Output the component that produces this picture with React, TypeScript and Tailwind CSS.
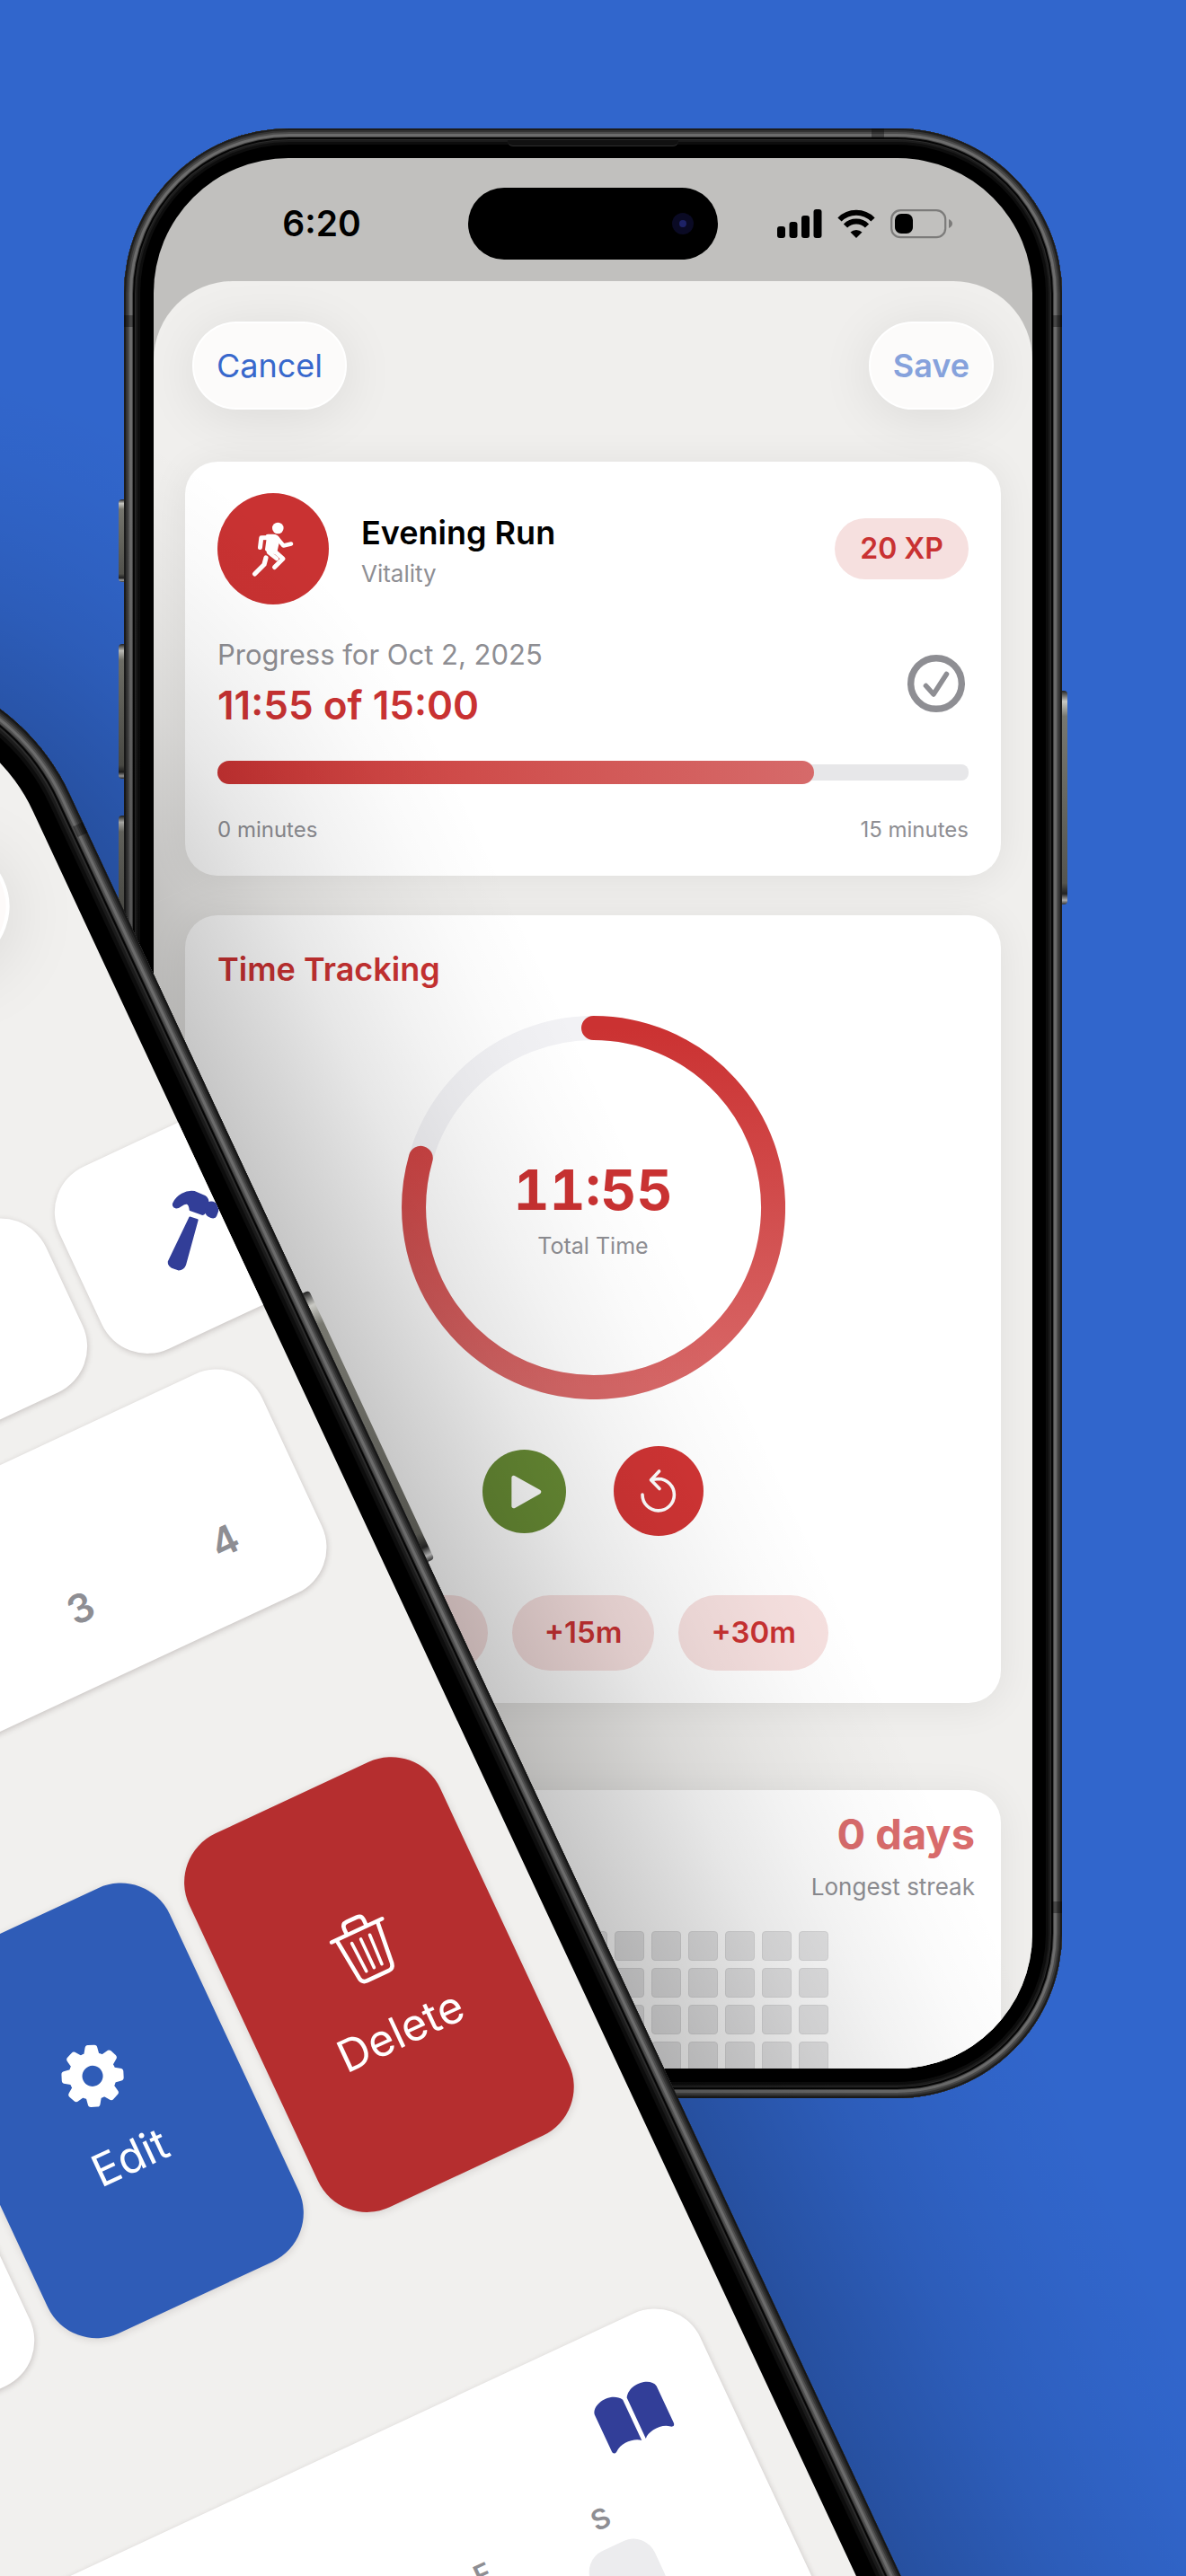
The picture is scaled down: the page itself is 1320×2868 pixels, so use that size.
import type { ReactNode } from "react";

const steps = ["+5m", "+15m", "+30m"];
const heat = Array.from({ length: 52 }, (_, i) => i);

const card = "rounded-[36px] bg-white shadow-[0_4px_44px_rgba(0,0,0,0.07)]";
const tile = "bg-white shadow-[0_2px_6px_rgba(60,40,40,0.22)]";
const sideButton =
  "absolute bg-[linear-gradient(to_bottom,#222_0%,#c9c9c4_5%,#77776f_12%,#55554f_90%,#222_95%,#aaa_98%,#333_100%)]";

function SignalIcon() {
  return (
    <svg width="50" height="32" viewBox="0 0 50 32" aria-hidden="true">
      <rect x="0" y="19" width="9" height="13" rx="3" />
      <rect x="13.5" y="14" width="9" height="18" rx="3" />
      <rect x="27" y="7" width="9" height="25" rx="3" />
      <rect x="40.5" y="0" width="9" height="32" rx="3" />
    </svg>
  );
}

function WifiIcon() {
  return (
    <svg width="42" height="32" viewBox="0 0 42 32" aria-hidden="true">
      <g fill="none" stroke="#000" strokeWidth="6">
        <path d="M2.500 11.500A26 26 0 0 1 39.500 11.500" />
        <path d="M9 18.500A17 17 0 0 1 33 18.500" />
      </g>
      <path d="M21 32L14.500 25.500A9.500 9.500 0 0 1 27.500 25.500Z" />
    </svg>
  );
}

function BatteryIcon() {
  return (
    <svg width="70" height="34" viewBox="0 0 70 34" aria-hidden="true">
      <rect x="1.2" y="2.2" width="60" height="30" rx="10" fill="none" stroke="#7c7b7a" strokeWidth="2.2" />
      <rect x="5" y="6" width="20" height="22" rx="7" />
      <path d="M65 12Q69 14 69 17T65 22Z" fill="#7c7b7a" />
    </svg>
  );
}

function RunnerIcon() {
  return (
    <svg viewBox="0 0 124 124" className="size-full" fill="none" stroke="#fff" strokeLinecap="round" strokeLinejoin="round" aria-hidden="true">
      <circle cx="67.3" cy="39" r="6.3" fill="#fff" stroke="none" />
      <path d="M47.500 60.500L48.800 49.800L60 49.500" strokeWidth="5" />
      <path d="M56 48H62Q66 48 68 52L73.500 58.500L82 56.500" strokeWidth="4.6" />
      <path d="M58 49L65 51L66 56L64 65L73 73L63.500 82.500" strokeWidth="5" />
      <path d="M56 48L66 49L67 55L64 67L57 66L54 63Z" fill="#fff" strokeWidth="2" />
      <path d="M57 66L66 73" strokeWidth="4.5" />
      <path d="M54 72L52 79.500L41.500 90" strokeWidth="5.2" />
    </svg>
  );
}

function HammerIcon() {
  return (
    <svg width="100" height="100" viewBox="0 0 100 100" fill="#323e98" stroke="#323e98" strokeWidth="2" strokeLinejoin="round" aria-hidden="true">
      <path d="M35 23C32 21 33 18 35 17C41 12 53 10 61 16L69 25C71 28 70 32 69 34C71 33 74 34 76 37C79 40 78 42 75 46L71 50C69 52 66 50 64 47C62 44 63 41 64 39C62 42 60 43 58 42L48 32C49 29 50 26 48 24C44 21 39 25 35 23Z" />
      <path d="M44 39.500L50.500 45.500L17 85Q13 89 8 86.500L2.500 81Q0 77 2 74Z" />
    </svg>
  );
}

function BookIcon() {
  const page =
    "M11 28C13 16 38 12 46.500 26V76C41 70 24 68 16 75.500C13 77.500 11 76 11 73Z";
  return (
    <svg width="100" height="100" viewBox="0 0 100 100" fill="#323e98" aria-hidden="true">
      <path d={page} />
      <path d={page} transform="translate(98 0) scale(-1 1)" />
    </svg>
  );
}

function TrashIcon() {
  return (
    <svg width="100" height="100" viewBox="0 0 100 100" fill="none" stroke="#fff" strokeWidth="4.6" strokeLinecap="round" strokeLinejoin="round" aria-hidden="true">
      <path d="M22 27.500H84" />
      <path d="M41 27V20Q41 14 47 14H59Q65 14 65 20V27" />
      <path d="M28 28L33 77Q34 83 40 83H66Q72 83 73 77L78 28" />
      <path d="M42 38L43.500 73M53 38V73M64 38L62.500 73" strokeWidth="3.6" />
    </svg>
  );
}

function GearIcon() {
  return (
    <svg width="100" height="100" viewBox="-50 -50 100 100" fill="#fff" aria-hidden="true">
      <circle r="19" fill="none" stroke="#fff" strokeWidth="15" />
      {[22, 67, 112, 157, 202, 247, 292, 337].map((a) => (
        <path
          key={a}
          transform={`rotate(${a})`}
          d="M-9 -22L-7 -31Q-6.500 -34.500 -3.500 -34.500H3.500Q6.500 -34.500 7 -31L9 -22Z"
        />
      ))}
    </svg>
  );
}

function Antennas() {
  return (
    <>
      <span className="absolute left-0 top-[9.5%] h-[13px] w-3 bg-black/35" />
      <span className="absolute right-0 top-[9.5%] h-[13px] w-3 bg-black/35" />
      <span className="absolute right-0 top-[90%] h-[13px] w-3 bg-black/35" />
      <span className="absolute right-[19%] top-0 h-3 w-[14px] bg-black/35" />
    </>
  );
}

function BackPhone({ children }: { children: ReactNode }) {
  return (
    <div className="relative rounded-[184px] bg-black p-[33px] shadow-[inset_0_0_0_2px_#1c1c1c,inset_0_0_0_4px_#333,inset_0_0_0_6px_#4b4b4b,inset_0_0_0_9px_#6c6c6c,inset_0_0_0_10px_#444,inset_0_0_0_12px_#050505,inset_0_0_0_13px_#2b2b2b,inset_0_0_0_15px_#1b1b1b,inset_0_0_0_18px_#0d0d0d]">
      <span className={`${sideButton} right-full top-[413px] h-[92px] w-[6px] rounded-l-sm`} />
      <span className={`${sideButton} right-full top-[574px] h-[150px] w-[6px] rounded-l-sm`} />
      <span className={`${sideButton} right-full top-[765px] h-[150px] w-[6px] rounded-l-sm`} />
      <span className={`${sideButton} left-full top-[626px] h-[238px] w-[6px] rounded-r-sm`} />
      <Antennas />
      <span className="absolute left-1/2 top-[13px] h-[7px] w-[190px] -translate-x-1/2 rounded-b-md border-b border-[#2e2e2e] bg-[#111]" />
      <div className="relative flex aspect-[978/2127] w-full flex-col overflow-hidden rounded-[150px] bg-[#c1c0be]">
        {children}
      </div>
    </div>
  );
}

/* Soft shadow cast by the tilted phone: a strip beside its long edge and a rounded corner piece. */
function CastShadow() {
  return (
    <>
      <div className="absolute bottom-0 left-full top-[400px] w-[400px] bg-[linear-gradient(to_right,rgba(0,0,0,0.22)_0px,rgba(0,0,0,0.155)_80px,rgba(0,0,0,0.095)_160px,rgba(0,0,0,0.05)_240px,rgba(0,0,0,0.018)_320px,rgba(0,0,0,0)_400px)]" />
      <div className="absolute -right-[400px] -top-[400px] size-[800px] bg-[radial-gradient(circle_at_bottom_left,rgba(0,0,0,0.22)_400px,rgba(0,0,0,0.155)_480px,rgba(0,0,0,0.095)_560px,rgba(0,0,0,0.05)_640px,rgba(0,0,0,0.018)_720px,rgba(0,0,0,0)_800px)]" />
    </>
  );
}

function FrontPhone({ children }: { children: ReactNode }) {
  return (
    <div className="absolute right-full top-[658px] mr-7 w-[108%] origin-top-right -rotate-25">
      <CastShadow />
      <span className={`${sideButton} left-full top-[863px] h-[330px] w-2 rounded-r`} />
      <div className="relative rounded-[250px] bg-black p-[45px] shadow-[inset_0_0_0_2px_#161616,inset_0_0_0_4px_#262626,inset_0_0_0_6px_#383838,inset_0_0_0_8px_#505050,inset_0_0_0_11px_#6c6c6c,inset_0_0_0_13px_#505050,inset_0_0_0_14px_#333,inset_0_0_0_16px_#050505,inset_0_0_0_18px_#2b2b2b,inset_0_0_0_21px_#1b1b1b,inset_0_0_0_25px_#0d0d0d]">
        <Antennas />
        <div className="flex aspect-[978/2127] w-full flex-col overflow-hidden rounded-[205px] bg-[#f1f0ee] px-[45px] pt-[190px]">
          {children}
        </div>
      </div>
    </div>
  );
}

function ProgressCard() {
  return (
    <section className={`${card} flex flex-col px-9 py-[35px]`}>
      <div className="flex items-center">
        <div className="size-[124px] rounded-full bg-[#c93232]">
          <RunnerIcon />
        </div>
        <div className="ml-9 flex-1 pt-1">
          <h1 className="text-[36px] font-semibold leading-11 text-black">Evening Run</h1>
          <p className="mt-2 text-[26px] leading-8 text-[#8e8e93]">Vitality</p>
        </div>
        <span className="rounded-full bg-[#f6e0df] px-7 py-3 text-[32px] font-semibold leading-11 text-[#c93232]">
          20 XP
        </span>
      </div>
      <div className="mt-9 flex items-center justify-between">
        <div>
          <p className="text-[31px] leading-10 text-[#8e8e93]">Progress for Oct 2, 2025</p>
          <p className="mt-2 text-[44px] font-semibold leading-14 text-[#c93232]">11:55 of 15:00</p>
        </div>
        <button type="button" aria-label="Mark complete" className="mr-1">
          <svg width="64" height="64" viewBox="0 0 64 64" fill="none" stroke="#8e8e93" strokeLinecap="round" strokeLinejoin="round" aria-hidden="true">
            <circle cx="32" cy="32" r="28.3" strokeWidth="7.4" />
            <path d="M20.500 34.500L29 44L43.500 21.500" strokeWidth="5.6" />
          </svg>
        </button>
      </div>
      <div
        role="progressbar"
        aria-label="Progress"
        aria-valuenow={715}
        aria-valuemin={0}
        aria-valuemax={900}
        className="relative mt-[34px] flex h-[26px] items-center"
      >
        <div className="h-[18px] w-full rounded-lg bg-[#e7e7e9]" />
        <div
          className="absolute inset-y-0 left-0 rounded-full bg-linear-to-r from-[#c93232] to-[#d66a6a]"
          style={{ width: `${(715 / 900) * 100}%` }}
        />
      </div>
      <div className="mt-[35px] flex justify-between text-[24px] leading-8 text-[#8e8e93]">
        <span>0 minutes</span>
        <span>15 minutes</span>
      </div>
    </section>
  );
}

function TimeCard() {
  return (
    <section className={`${card} mt-11 flex flex-col items-center p-9`}>
      <h2 className="self-start text-[36px] font-semibold leading-12 text-[#c93232]">Time Tracking</h2>
      <div className="relative mt-7 flex size-[427px] flex-col items-center justify-center pt-1">
        <svg viewBox="0 0 427 427" className="absolute inset-0 size-full" fill="none" strokeWidth="27" aria-hidden="true">
          <defs>
            <linearGradient id="ring" x1="0" y1="0" x2="0" y2="1">
              <stop offset="0" stopColor="#cb3232" />
              <stop offset="1" stopColor="#d86868" />
            </linearGradient>
          </defs>
          <circle cx="213.5" cy="213.5" r="200" stroke="#f2f2f5" />
          <path d="M213.500 13.500A200 200 0 1 1 21.300 158.400" stroke="url(#ring)" strokeLinecap="round" />
        </svg>
        <p className="relative text-[62px] font-bold leading-17 tabular-nums text-[#c93232]">11:55</p>
        <p className="relative mt-3 text-[25px] leading-8 text-[#8e8e93]">Total Time</p>
      </div>
      <div className="mt-[52px] flex items-center gap-[53px]">
        <button type="button" aria-label="Start timer" className="size-[93px] rounded-full bg-[#678b34]">
          <svg viewBox="0 0 92 92" className="size-full" fill="#fff" stroke="#fff" strokeWidth="5" strokeLinejoin="round" aria-hidden="true">
            <path d="M34.500 31L62 46.500L34.500 62Z" />
          </svg>
        </button>
        <button type="button" aria-label="Reset timer" className="size-[100px] rounded-full bg-[#d03434]">
          <svg viewBox="0 0 100 100" className="size-full" fill="none" stroke="#fff" strokeWidth="3.6" strokeLinecap="round" strokeLinejoin="round" aria-hidden="true">
            <path d="M32 54A17.700 17.700 0 1 0 49.700 36.500L42.500 37.500" />
            <path d="M50.600 28L41.500 37.700L51 47.500" />
          </svg>
        </button>
      </div>
      <div className="mt-[66px] flex gap-[27px]">
        {steps.map((s) => (
          <button key={s} type="button" className="h-[84px] rounded-full bg-[#f6e0df] px-9 text-[33px] font-semibold text-[#c93232]">
            {s}
          </button>
        ))}
      </div>
    </section>
  );
}

function StreakCard() {
  return (
    <section className="mt-[97px] flex-1 rounded-t-[36px] bg-white pl-9 pr-[29px] pt-[21px] shadow-[0_4px_44px_rgba(0,0,0,0.07)]">
      <div className="text-right">
        <p className="text-[47px] font-bold leading-14 text-[#d96c6c]">0 days</p>
        <p className="mt-[15px] text-[26px] leading-8 text-[#8e8e93]">Longest streak</p>
      </div>
      <div className="mr-2 mt-[33px] flex justify-center">
        <div className="grid grid-cols-13 gap-2">
          {heat.map((i) => (
            <span key={i} className="size-[33px] rounded-[4px] border border-[#d8d8d9] bg-[#e4e4e5]" />
          ))}
        </div>
      </div>
    </section>
  );
}

function HabitScreen() {
  return (
    <>
      <div className="grid h-[137px] shrink-0 grid-cols-[1fr_278px_1fr] items-center pt-2 text-black">
        <time className="ml-6 justify-self-center text-[39px] font-semibold leading-12">6:20</time>
        <div className="flex h-20 items-center justify-end rounded-full bg-black pr-[27px]">
          <span className="flex size-6 items-center justify-center rounded-full bg-[#0a0a24]">
            <span className="size-2 rounded-full bg-[#1d2266]" />
          </span>
        </div>
        <div className="ml-[66px] flex items-center gap-[17px]">
          <SignalIcon />
          <WifiIcon />
          <BatteryIcon />
        </div>
      </div>
      <div className="flex min-h-0 flex-1 flex-col rounded-t-[88px] bg-[#f0efed] px-[35px] pt-[45px]">
        <header className="mb-[58px] flex justify-between px-2 text-[36px]">
          <button type="button" className="h-[98px] rounded-full border-2 border-white bg-[#fcfbfa] px-[25px] text-[#3868cc] shadow-[0_8px_60px_rgba(0,0,0,0.09)]">
            Cancel
          </button>
          <button type="button" className="h-[98px] rounded-full border-2 border-white bg-[#fcfbfa] px-[25px] font-semibold text-[#86a2dc] shadow-[0_8px_60px_rgba(0,0,0,0.09)]">
            Save
          </button>
        </header>
        <ProgressCard />
        <TimeCard />
        <StreakCard />
      </div>
    </>
  );
}

function ListScreen() {
  return (
    <>
      <button type="button" aria-label="Add habit" className="mr-[17px] size-[140px] shrink-0 self-end rounded-full border-4 border-white bg-[#fdfaf9] shadow-[0_10px_80px_rgba(0,0,0,0.1)]" />
      <div className="-mr-[163px] mt-[257px] flex shrink-0 items-center justify-end gap-5">
        <div className={`${tile} h-[208px] w-[290px] rounded-[56px]`} />
        <div className={`${tile} flex h-[224px] w-[290px] items-center justify-center rounded-[56px]`}>
          <HammerIcon />
        </div>
      </div>
      <div className={`${tile} mt-[38px] flex h-[269px] shrink-0 justify-end rounded-[56px] pr-4 pt-[158px] text-[44px] font-semibold leading-12 text-[#8e8e93]`}>
        <span className="w-[177px] text-center">3</span>
        <span className="w-[177px] text-center">4</span>
      </div>
      <div className="mt-[204px] flex h-[459px] shrink-0 justify-end gap-6 pr-1 text-[49px] leading-14 text-white">
        <div className={`${tile} flex-1 rounded-[56px]`} />
        <button type="button" className="flex w-[308px] flex-col items-center justify-center gap-[22px] rounded-[60px] bg-[#2f5cb7] pb-2 shadow-[0_2px_8px_rgba(60,40,40,0.15)]">
          <GearIcon />
          Edit
        </button>
        <button type="button" className="flex w-[308px] flex-col items-center justify-center gap-[22px] rounded-[60px] bg-[#b52e2f] pb-2 shadow-[0_2px_8px_rgba(60,40,40,0.15)]">
          <TrashIcon />
          Delete
        </button>
      </div>
      <div className={`${tile} mt-[222px] flex flex-1 flex-col items-end rounded-t-[56px] pt-[56px]`}>
        <div className="mr-[54px]">
          <BookIcon />
        </div>
        <div className="mr-[113px] mt-4 flex text-[31px] font-semibold leading-10 text-[#8e8e93]">
          {["F", "S"].map((d) => (
            <div key={d} className="flex w-[145px] flex-col items-center gap-[13px]">
              {d}
              <span className="size-[78px] rounded-[26px] bg-[#ececee]" />
            </div>
          ))}
        </div>
      </div>
    </>
  );
}

export default function App() {
  return (
    <main className="relative min-h-screen overflow-hidden bg-[#3166cc] px-[138px] pt-[143px] font-['Inter',sans-serif]">
      <BackPhone>
        <HabitScreen />
      </BackPhone>
      <FrontPhone>
        <ListScreen />
      </FrontPhone>
    </main>
  );
}
